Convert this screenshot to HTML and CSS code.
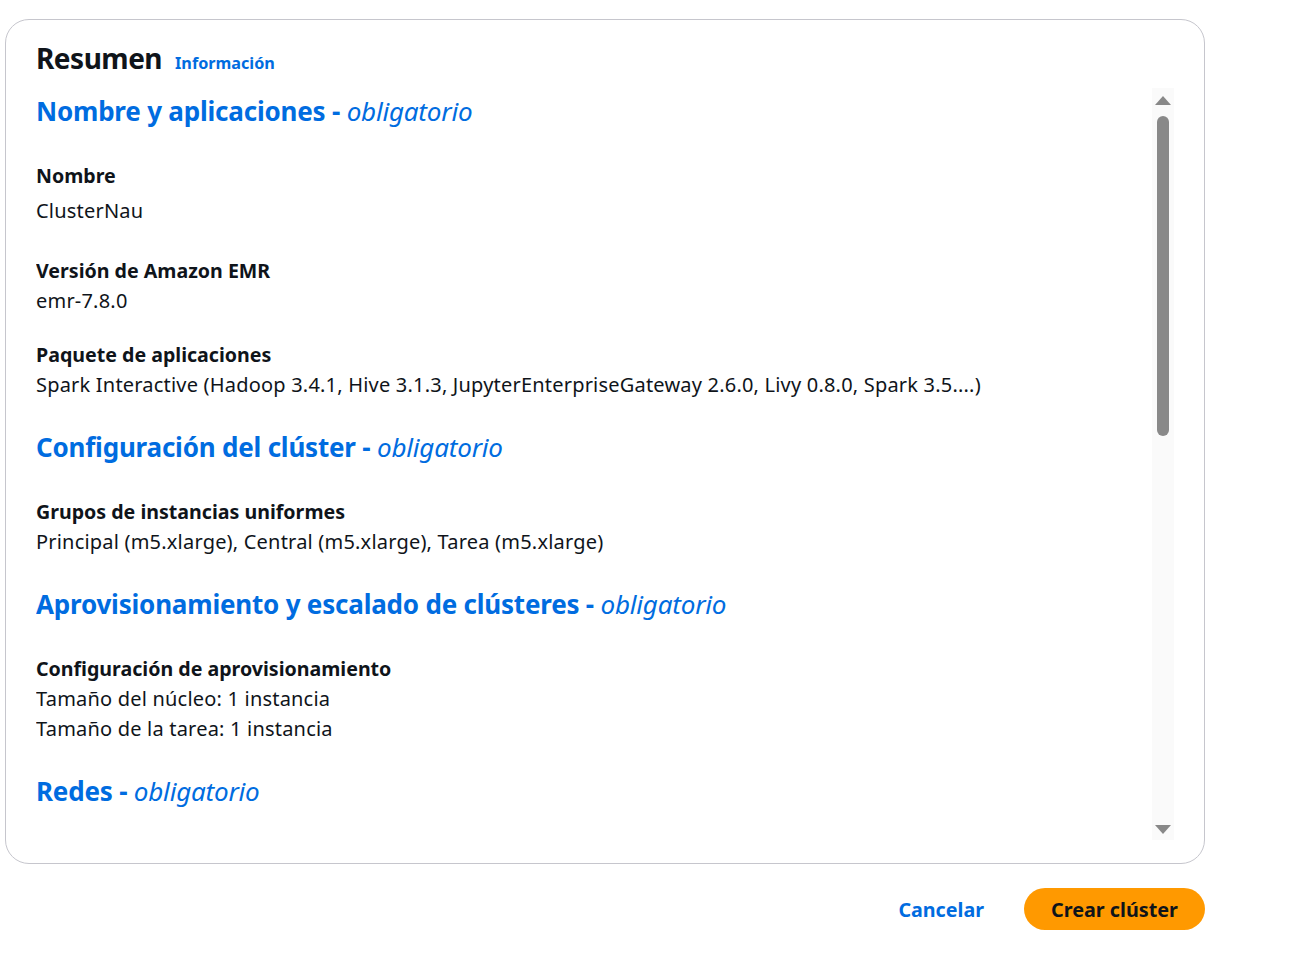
FILE: index.html
```html
<!DOCTYPE html>
<html lang="es">
<head>
<meta charset="utf-8">
<title>Resumen</title>
<link rel="stylesheet" href="styles.css">
</head>
<body>
<div class="page">
  <div class="card">
    <div class="card-header">
      <h2 class="title">Resumen</h2>
      <a class="info" href="#">Información</a>
    </div>
    <div class="card-body">
      <div class="scroll">
        <section class="section">
          <h3 class="sec-title">Nombre y aplicaciones - <em>obligatorio</em></h3>
          <div class="item item-name">
            <div class="label">Nombre</div>
            <div class="value first">ClusterNau</div>
          </div>
          <div class="item">
            <div class="label">Versión de Amazon EMR</div>
            <div class="value">emr-7.8.0</div>
          </div>
          <div class="item">
            <div class="label">Paquete de aplicaciones</div>
            <div class="value">Spark Interactive (Hadoop 3.4.1, Hive 3.1.3, JupyterEnterpriseGateway 2.6.0, Livy 0.8.0, Spark 3.5....)</div>
          </div>
        </section>
        <section class="section">
          <h3 class="sec-title">Configuración del clúster - <em>obligatorio</em></h3>
          <div class="item">
            <div class="label">Grupos de instancias uniformes</div>
            <div class="value">Principal (m5.xlarge), Central (m5.xlarge), Tarea (m5.xlarge)</div>
          </div>
        </section>
        <section class="section">
          <h3 class="sec-title">Aprovisionamiento y escalado de clústeres - <em>obligatorio</em></h3>
          <div class="item">
            <div class="label">Configuración de aprovisionamiento</div>
            <div class="value">Tamaño del núcleo: 1 instancia</div>
            <div class="value">Tamaño de la tarea: 1 instancia</div>
          </div>
        </section>
        <section class="section">
          <h3 class="sec-title">Redes - <em>obligatorio</em></h3>
        </section>
      </div>
      <div class="scrollbar">
        <span class="arrow up"></span>
        <div class="track"><span class="thumb"></span></div>
        <span class="arrow down"></span>
      </div>
    </div>
  </div>
  <div class="actions">
    <a class="cancel" href="#">Cancelar</a>
    <button class="primary" type="button">Crear clúster</button>
  </div>
</div>
</body>
</html>
```

FILE: styles.css
```css
* { box-sizing: border-box; }
html, body { margin: 0; padding: 0; background: #ffffff; }
body {
  font-family: "Noto Sans", "Open Sans", sans-serif;
  color: #0f141a;
}
.page {
  padding: 19px 0 0 5px;
  width: 1205px;
}
.card {
  width: 1200px;
  height: 845px;
  border: 1px solid #c6c6cd;
  border-radius: 24px;
  padding: 0 30px 0 30px;
  display: flex;
  flex-direction: column;
}
.card-header {
  display: flex;
  align-items: baseline;
  gap: 13px;
  padding-top: 19px;
  height: 68px;
}
.title {
  margin: 0;
  font-size: 28px;
  font-weight: 700;
  letter-spacing: -0.5px;
  line-height: 38px;
}
.info {
  color: #006ce0;
  font-size: 16.2px;
  font-weight: 700;
  text-decoration: none;
}
.card-body {
  display: flex;
  height: 752px;
}
.scroll {
  flex: 1;
  overflow: hidden;
}
.section {
  padding-top: 4px;
}
.sec-title {
  margin: 0 0 31px 0;
  color: #006ce0;
  font-size: 26px;
  font-weight: 700;
  line-height: 38px;
  letter-spacing: -0.2px;
}
.sec-title em {
  font-weight: 400;
}
.item {
  margin-bottom: 24px;
}
.item-name {
  margin-bottom: 30px;
}
.label {
  font-size: 19.6px;
  font-weight: 700;
  line-height: 30px;
}
.value {
  font-size: 20px;
  line-height: 30px;
  letter-spacing: 0.2px;
}
.value.first {
  margin-top: 5px;
}
.scrollbar {
  width: 22px;
  background: #fafafa;
  display: flex;
  flex-direction: column;
  align-items: center;
  padding: 8px 0 6px;
}
.arrow {
  width: 0;
  height: 0;
  border-left: 8px solid transparent;
  border-right: 8px solid transparent;
}
.arrow.up { border-bottom: 9px solid #888888; }
.arrow.down { border-top: 9px solid #888888; }
.track {
  flex: 1;
  width: 12px;
  padding: 11px 0 0;
}
.thumb {
  display: block;
  width: 12px;
  height: 320px;
  border-radius: 6px;
  background: #898989;
}
.actions {
  display: flex;
  justify-content: flex-end;
  align-items: center;
  gap: 40px;
  width: 1200px;
  padding-top: 24px;
}
.cancel {
  color: #006ce0;
  font-size: 19.7px;
  font-weight: 700;
  text-decoration: none;
}
.primary {
  height: 42px;
  width: 181px;
  border: none;
  border-radius: 21px;
  background: #ff9900;
  color: #0f141a;
  font-family: inherit;
  font-size: 19.8px;
  font-weight: 700;
  cursor: pointer;
}
```
